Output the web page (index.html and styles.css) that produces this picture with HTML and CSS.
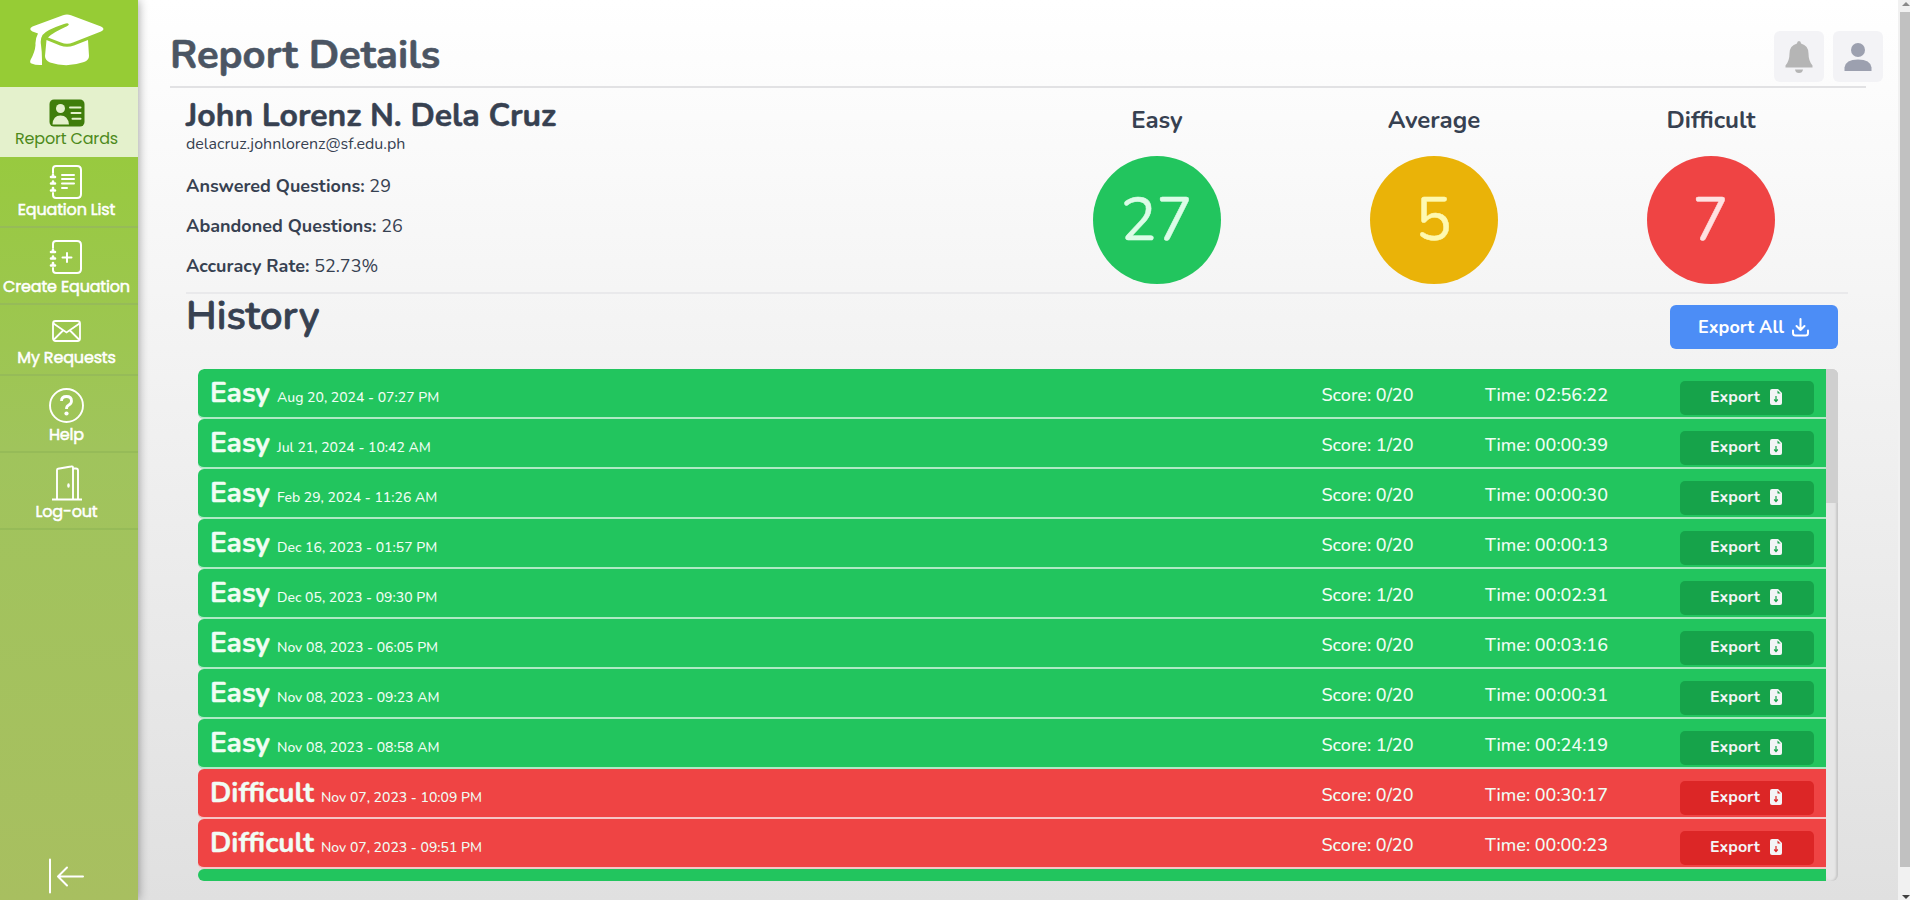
FILE: index.html
```html
<!DOCTYPE html>
<html lang="en">
<head>
<meta charset="utf-8">
<title>Report Details</title>
<link rel="stylesheet" href="styles.css">
</head>
<body>
<div class="app">
  <nav class="sidebar">
    <div class="brand">
      <svg width="74" height="52" viewBox="0 0 74 52" fill="#fff"><path d="M37 .5Q39 .5 41 1.300L71 12.500Q76 15 71 17.500L43 28.500Q37 31 31 28.500L18 23.500Q22 19 37 12.300Q40 10.500 38 9.500Q37 9 34 10Q16 16 12.500 21Q10 25 11 31Q12 38 12 46V51Q6 51.500 1.500 49.500Q-.5 49 .5 46Q5 38 5.500 31Q5 25 8 19.500L2.500 17.500Q-2 15 2.500 12.500L33 1.300Q35 .5 37 .5Z"/><path d="M16.500 26L30 31.500Q37 34 44 31.500L58 26L59 42Q59 46 54 48Q37 54 20 48.500Q15 46 15 42Z"/></svg>
    </div>
    <a class="item item-active">
      <svg width="36" height="28" viewBox="0 0 36 28"><rect x=".5" y=".5" width="35" height="27" rx="4.500" fill="#3f7d0a"/><g fill="#e4f1cc"><circle cx="11.500" cy="9.500" r="4.500"/><path d="M3.500 25.500Q4 16.500 11.500 16.500T20 25.500Z"/></g><path d="M21 8.500h10.500M22.500 14h9M23.500 19.800h8" stroke="#e4f1cc" stroke-width="2" stroke-linecap="round"/></svg>
      <span class="label">Report Cards</span>
    </a>
    <a class="item item-list">
      <svg width="36" height="36" viewBox="0 0 36 36" fill="none" stroke="#fff" stroke-width="2" stroke-linecap="round"><path d="M4 9V5Q4 2 7 2H28Q32 2 32 6V30Q32 34 28 34H7Q4 34 4 31V29"/><path d="M13 11h12M13 15h12M13 19.500h12M13 24h5"/><path d="M2 13h4M2 19.500h4M2 26.500h4M4 11v2M4 17.500v2M4 24v2" stroke-width="2.600"/></svg>
      <span class="label">Equation List</span>
    </a>
    <a class="item item-create">
      <svg width="36" height="36" viewBox="0 0 36 36" fill="none" stroke="#fff" stroke-width="2" stroke-linecap="round"><path d="M4 9V5Q4 2 7 2H28Q32 2 32 6V30Q32 34 28 34H7Q4 34 4 31V29"/><path d="M18 14v9M13.500 18.500h9"/><path d="M2 13h4M2 19.500h4M2 26.500h4M4 11v2M4 17.500v2M4 24v2" stroke-width="2.600"/></svg>
      <span class="label">Create Equation</span>
    </a>
    <a class="item item-requests">
      <svg width="30" height="24" viewBox="0 0 30 24" fill="none" stroke="#fff" stroke-width="1.800"><rect x="1" y="2" width="27" height="20" rx="2.500"/><path d="M1.500 4.500L14.500 13.500L27.500 4.500M2 20.500L11 11.500M27 20.500L18 11.500"/></svg>
      <span class="label">My Requests</span>
    </a>
    <a class="item item-help">
      <svg width="36" height="36" viewBox="0 0 36 36" fill="none" stroke="#fff"><circle cx="17.500" cy="18.500" r="16.500" stroke-width="1.900"/><path d="M12.500 14Q12.500 9.500 17.500 9.500T22.500 14Q22.500 16.500 19.800 18Q17.500 19.200 17.500 22" stroke-width="2.800"/><circle cx="17.500" cy="26.500" r="2.100" fill="#fff" stroke="none"/></svg>
      <span class="label">Help</span>
    </a>
    <a class="item item-logout">
      <svg width="32" height="36" viewBox="0 0 32 36" fill="none" stroke="#fff" stroke-width="1.900" stroke-linejoin="round"><path d="M1 34.500H31M6 34V5Q6 4 7 3.800L20 1.500Q22 1 22 3V34M22 3.500H25Q27 3.500 27 5.500V34"/><ellipse cx="17.500" cy="20.500" rx="1.300" ry="2.200" fill="#fff" stroke="none"/></svg>
      <span class="label">Log-out</span>
    </a>
    <div class="collapse">
      <svg width="36" height="36" viewBox="0 0 36 36" fill="none" stroke="#fff" stroke-width="2" stroke-linecap="round" stroke-linejoin="round"><path d="M2 1.500V34.500M35 18.500H10M19 9.500L10 18.500L19 27.500"/></svg>
    </div>
  </nav>

  <main class="main">
    <header class="topbar">
      <h1 class="title">Report Details</h1>
      <div class="actions">
        <button class="icon-btn"><svg width="28" height="32" viewBox="0 0 28 32" fill="#b5b5b5"><path d="M14 0Q16 0 16 2.500Q23.500 4.500 23.500 12.500Q23.500 20 27.500 24.500V26.500H.5V24.500Q4.500 20 4.500 12.500Q4.500 4.500 12 2.500Q12 0 14 0ZM10 28.500H18Q17.500 32 14 32T10 28.500Z"/></svg></button>
        <button class="icon-btn"><svg width="28" height="28" viewBox="0 0 28 28" fill="#9ca0af"><circle cx="14" cy="7" r="7"/><path d="M.5 28V24.500Q1.500 16.500 14 16.500T27.500 24.500V28Z"/></svg></button>
      </div>
    </header>

    <section class="summary">
      <div class="person">
        <h2 class="name">John Lorenz N. Dela Cruz</h2>
        <p class="email">delacruz.johnlorenz@sf.edu.ph</p>
        <p class="stat"><b>Answered Questions:</b> 29</p>
        <p class="stat"><b>Abandoned Questions:</b> 26</p>
        <p class="stat"><b>Accuracy Rate:</b> 52.73%</p>
      </div>
      <div class="levels">
        <div class="level"><h3 class="level-name">Easy</h3><div class="circle circle-easy">27</div></div>
        <div class="level"><h3 class="level-name">Average</h3><div class="circle circle-average">5</div></div>
        <div class="level"><h3 class="level-name">Difficult</h3><div class="circle circle-difficult">7</div></div>
      </div>
    </section>

    <section class="history">
      <div class="history-head">
        <h2 class="history-title">History</h2>
        <button class="export-all"><span>Export All</span><svg width="17" height="19" viewBox="0 0 17 19" fill="none" stroke="#fff" stroke-width="2" stroke-linecap="round" stroke-linejoin="round"><path d="M8.500 1V12M4.500 8L8.500 12L12.500 8M1 12.500V15Q1 17.500 3.500 17.500H13.500Q16 17.500 16 15V12.500"/></svg></button>
      </div>
      <div class="list">
        <div class="rows" id="rows"></div>
        <div class="list-bar"><div class="list-thumb"></div></div>
      </div>
    </section>
  </main>

  <div class="page-bar">
    <span class="arrow-up"></span>
    <div class="page-thumb"></div>
    <span class="arrow-down"></span>
  </div>
</div>
<script src="rows.js"></script>
</body>
</html>
```
FILE: rows.js
```js
const attempts = [
  ["Easy", "Aug 20, 2024 - 07:27 PM", "0/20", "02:56:22"],
  ["Easy", "Jul 21, 2024 - 10:42 AM", "1/20", "00:00:39"],
  ["Easy", "Feb 29, 2024 - 11:26 AM", "0/20", "00:00:30"],
  ["Easy", "Dec 16, 2023 - 01:57 PM", "0/20", "00:00:13"],
  ["Easy", "Dec 05, 2023 - 09:30 PM", "1/20", "00:02:31"],
  ["Easy", "Nov 08, 2023 - 06:05 PM", "0/20", "00:03:16"],
  ["Easy", "Nov 08, 2023 - 09:23 AM", "0/20", "00:00:31"],
  ["Easy", "Nov 08, 2023 - 08:58 AM", "1/20", "00:24:19"],
  ["Difficult", "Nov 07, 2023 - 10:09 PM", "0/20", "00:30:17"],
  ["Difficult", "Nov 07, 2023 - 09:51 PM", "0/20", "00:00:23"]
];
const fileIcon = '<svg width="12" height="16" viewBox="0 0 12 16"><path d="M2 0H8L12 4V14Q12 16 10 16H2Q0 16 0 14V2Q0 0 2 0Z" fill="#f3f4f6"/><path d="M7.500 1.500V4.500H10.500Z" fill="currentColor"/><path d="M6 7V12M4.200 10.500L6 12.500L7.800 10.500" fill="none" stroke="currentColor" stroke-width="1.200"/></svg>';
document.getElementById("rows").innerHTML = attempts.map(([level, date, score, time]) =>
  `<div class="row row-${level.toLowerCase()}">
    <div class="row-main"><span class="row-level">${level}</span><span class="row-date">${date}</span></div>
    <span class="row-score">Score: ${score}</span>
    <span class="row-time">Time: ${time}</span>
    <button class="row-export"><span>Export</span>${fileIcon}</button>
  </div>`).join("") + '<div class="row row-easy"></div>';
```
FILE: styles.css
```css
* { box-sizing: border-box; }
body { margin: 0; font-family: Nunito, "Noto Sans", sans-serif; color: #374151; overflow: hidden; }
h1, h2, h3, p { margin: 0; }
button { border: 0; padding: 0; font: inherit; }
svg { display: block; flex: none; }
.app { display: flex; width: 1910px; height: 900px; background: linear-gradient(#fff, #e0e0e0); overflow: hidden; }

.sidebar { width: 138px; flex: none; display: flex; flex-direction: column; background: linear-gradient(#9acd32, #96cb38 88px, #a0c45c 450px, #a8bf60); box-shadow: 0 0 10px rgba(0,0,0,.4); }
.brand { height: 87px; padding: 14px 0 0 30px; background: #96cc35; }
.item { height: 70px; display: flex; flex-direction: column; align-items: center; padding-right: 5px; border-bottom: 2px solid #96bb58; color: #fff; font-family: Poppins, Inter, sans-serif; font-size: 16px; }
.item-active { background: #e4f1cc; color: #4d8a1b; padding-top: 12px; border: 0; }
.item-list { height: 71px; padding-top: 7px; }
.item-create { height: 77px; padding-top: 11px; }
.item-requests { height: 71px; padding-top: 14px; }
.item-help { height: 77px; padding-top: 11px; }
.item-logout { height: 77px; padding-top: 12px; }
.label { line-height: 20px; margin-top: 2px; letter-spacing: -.17px; white-space: nowrap; -webkit-text-stroke: .5px; }
.item-list .label { margin-top: 0; }
.item-logout .label { margin-top: 1px; }
.item-active .label { -webkit-text-stroke: 0; margin-top: 2px; }
.item-requests .label { margin-top: 5px; }
.collapse { margin-top: auto; padding: 0 0 6px 48px; }

.main { width: 1760px; flex: none; }
.topbar { height: 88px; margin: 0 32px 0 32px; border-bottom: 2px solid #e2e2e4; display: flex; justify-content: space-between; padding-top: 31px; }
.title { font-size: 40px; line-height: 48px; font-weight: 700; color: #4b5563; -webkit-text-stroke: .6px; }
.actions { display: flex; gap: 9px; margin-right: -17px; }
.icon-btn { width: 50px; height: 51px; border-radius: 6px; background: #f3f3f6; display: flex; justify-content: center; align-items: center; }
.summary { height: 206px; margin: 0 50px 0 48px; border-bottom: 2px solid #e9e9eb; display: flex; justify-content: space-between; }
.name { font-size: 32px; line-height: 36px; margin-top: 10px; letter-spacing: -.03px; white-space: nowrap; -webkit-text-stroke: .5px; }
.email { font-size: 16px; line-height: 20px; }
.stat { font-size: 18px; line-height: 24px; margin-top: 16px; }
.email + .stat { margin-top: 20px; }
.stat b { font-weight: 700; }
.levels { display: grid; grid-template-columns: 277px 277px 277px; margin-right: -1px; }
.level { display: flex; flex-direction: column; align-items: center; }
.level-name { font-size: 24px; font-weight: 700; line-height: 32px; margin-top: 16px; padding-left: 1px; }
.circle { width: 128px; height: 128px; margin-top: 20px; border-radius: 50%; display: flex; align-items: center; justify-content: center; font-size: 60px; line-height: 1; -webkit-text-stroke: .5px; }
.circle-easy { background: #22c55e; color: #dcfce7; }
.circle-average { background: #eab308; color: #fef9b0; }
.circle-difficult { background: #ef4444; color: #fee2e2; }
.history { margin: 0 60px 0 48px; }
.history-head { height: 75px; display: flex; justify-content: space-between; align-items: flex-start; }
.history-title { font-size: 40px; font-weight: 600; line-height: 44px; -webkit-text-stroke: .8px; }
.export-all { width: 168px; height: 44px; margin-top: 11px; padding-right: 1px; border-radius: 6px; background: #4c8df6; color: #fff; font-size: 18px; font-weight: 700; display: flex; justify-content: center; align-items: center; gap: 8px; white-space: nowrap; }
.list { display: flex; height: 512px; margin-left: 12px; }
.rows { flex: 1; overflow: hidden; border-radius: 6px 0 0 6px; }
.row { height: 50px; border-bottom: 2px solid; border-radius: 6px 0 0 6px; display: flex; color: #f0fdf4; }
.row-easy { background: #22c55e; border-color: #aeeac4; }
.row-difficult { background: #ef4444; border-color: #f6c5c5; }
.row-main { width: 1110.500px; padding-left: 12px; line-height: 48px; display: flex; align-items: baseline; white-space: nowrap; }
.row-level { font-size: 28px; font-weight: 700; -webkit-text-stroke: .4px; }
.row-date { font-size: 14px; font-weight: 500; margin-left: 7px; }
.row-score { width: 164.500px; padding-left: 13px; font-size: 18px; font-weight: 500; line-height: 53px; }
.row-time { width: 207px; padding-left: 12px; font-size: 18px; font-weight: 500; line-height: 53px; }
.row-export { width: 134px; height: 34px; margin-top: 12px; padding: 0 2px 2px 0; border-radius: 5px; background: #16a34a; color: #f3f4f6; font-size: 16px; font-weight: 700; display: flex; align-items: center; justify-content: center; gap: 10px; }
.row-export svg { color: #16a34a; }
.row-difficult .row-export { background: #dc2626; }
.row-difficult .row-export svg { color: #dc2626; }
.list-bar { width: 12px; background: #e6e6e6; box-shadow: inset -2px 0 2px #c8c8c8; border-radius: 0 6px 6px 6px; }
.list-thumb { height: 134px; background: #cfcfcf; border-radius: 0 6px 0 0; }

.page-bar { width: 12px; background: #f1f1f1; display: flex; flex-direction: column; align-items: flex-end; padding-left: 2px; overflow: hidden; }
.page-thumb { width: 10px; height: 855px; background: #c1c1c1; }
.arrow-up, .arrow-down { width: 8px; border: 4px solid transparent; }
.arrow-up { height: 6px; margin-bottom: 6px; border-width: 2px 4px 4px; border-bottom-color: #8a8a8a; }
.arrow-down { height: 4px; border-width: 4px 4px 0; border-top-color: #404040; margin-top: 28px; }
```
